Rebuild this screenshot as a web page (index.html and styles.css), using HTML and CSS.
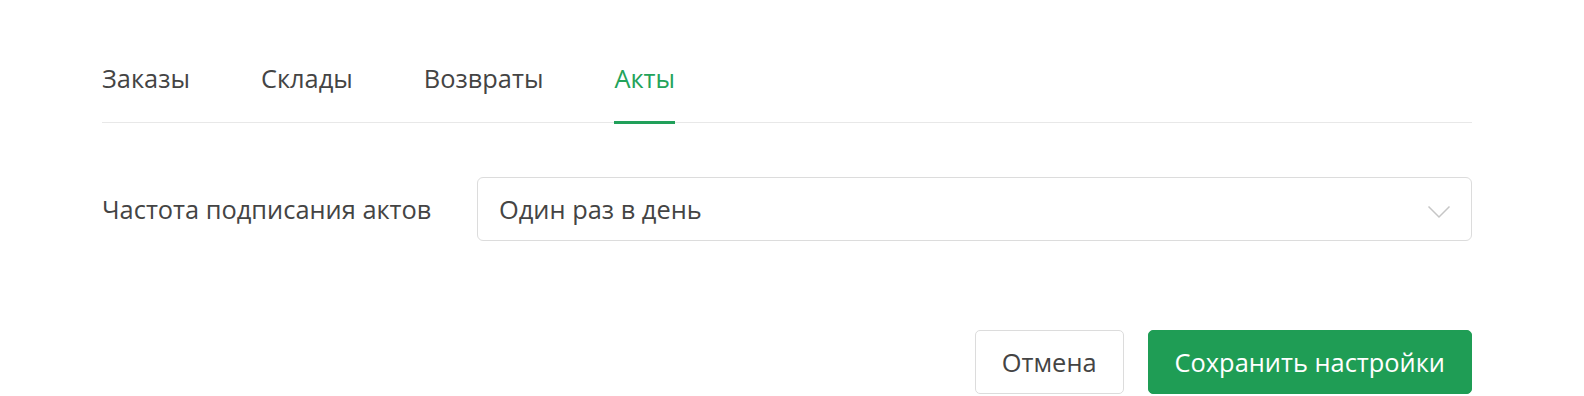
FILE: index.html
```html
<!DOCTYPE html>
<html lang="ru">
<head>
<meta charset="utf-8">
<title>Настройки</title>
<link rel="stylesheet" href="styles.css">
</head>
<body>
<div class="page">
  <nav class="tabs">
    <a class="tab">Заказы</a>
    <a class="tab">Склады</a>
    <a class="tab">Возвраты</a>
    <a class="tab tab-active">Акты</a>
  </nav>
  <div class="form-row">
    <div class="form-label">Частота подписания актов</div>
    <div class="select">
      <span class="select-value">Один раз в день</span>
      <svg class="select-arrow" width="24" height="14" viewBox="0 0 24 14"><path d="M1.5 1.5 L12 12 L22.5 1.5" fill="none" stroke="#c6c6c6" stroke-width="1.5"/></svg>
    </div>
  </div>
  <div class="actions">
    <button class="btn btn-default">Отмена</button>
    <button class="btn btn-primary">Сохранить настройки</button>
  </div>
</div>
</body>
</html>
```
FILE: styles.css
```css
html, body {
  margin: 0;
  padding: 0;
  background: #ffffff;
}
body {
  font-family: "Open Sans", "Noto Sans", sans-serif;
  color: #444444;
  font-size: 25.4px;
}
.page {
  width: 1370px;
  margin-left: 102px;
  padding-top: 60px;
}
.tabs {
  display: flex;
  gap: 71px;
  height: 62px;
  border-bottom: 1px solid #e8e8e8;
}
.tab {
  display: block;
  line-height: 36px;
  box-sizing: border-box;
  padding-bottom: 25px;
  border-bottom: 3px solid transparent;
  margin-bottom: -2px;
  height: 64px;
  cursor: pointer;
}
.tab-active {
  color: #23a35a;
  border-bottom-color: #21a05a;
}
.form-row {
  display: grid;
  grid-template-columns: 375px 1fr;
  align-items: center;
  margin-top: 54px;
}
.form-label {
  line-height: 36px;
}
.select {
  height: 64px;
  box-sizing: border-box;
  border: 1px solid #dcdcdc;
  border-radius: 6px;
  display: flex;
  align-items: center;
  justify-content: space-between;
  padding: 0 20px 0 21px;
}
.select-arrow {
  display: block;
  margin-top: 6px;
}
.actions {
  display: flex;
  justify-content: flex-end;
  gap: 24px;
  margin-top: 89px;
}
.btn {
  font-family: inherit;
  font-size: 25.4px;
  height: 64px;
  padding: 0 26px;
  border-radius: 5px;
  cursor: pointer;
}
.btn-default {
  background: #ffffff;
  color: #444444;
  border: 1px solid #dcdcdc;
}
.btn-primary {
  background: #1f9d55;
  color: #ffffff;
  border: 1px solid #1f9d55;
}
```
